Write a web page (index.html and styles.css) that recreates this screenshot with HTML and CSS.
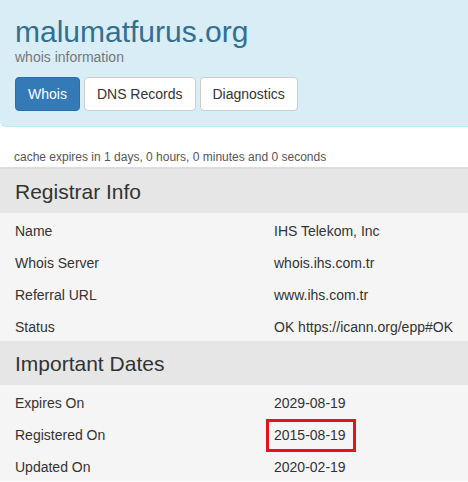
FILE: index.html
```html
<!DOCTYPE html>
<html lang="en">
<head>
    <meta charset="UTF-8">
    <meta name="viewport" content="width=device-width, initial-scale=1.0">
    <title>malumatfurus.org whois information</title>
    <link rel="stylesheet" href="styles.css">
</head>
<body>
    <div class="site-header">
        <h1 class="site-title">malumatfurus.org</h1>
        <div class="site-subtitle">whois information</div>
        <nav class="tabs">
            <a class="btn btn-primary" href="#">Whois</a>
            <a class="btn" href="#">DNS Records</a>
            <a class="btn" href="#">Diagnostics</a>
        </nav>
    </div>

    <div class="cache-note">cache expires in 1 days, 0 hours, 0 minutes and 0 seconds</div>

    <section class="info-section first">
        <h2 class="section-title">Registrar Info</h2>
        <div class="info-row"><span>Name</span><span>IHS Telekom, Inc</span></div>
        <div class="info-row"><span>Whois Server</span><span>whois.ihs.com.tr</span></div>
        <div class="info-row"><span>Referral URL</span><span>www.ihs.com.tr</span></div>
        <div class="info-row"><span>Status</span><span>OK https://icann.org/epp#OK</span></div>
    </section>

    <section class="info-section">
        <h2 class="section-title">Important Dates</h2>
        <div class="info-row"><span>Expires On</span><span>2029-08-19</span></div>
        <div class="info-row"><span>Registered On</span><span><span class="highlight">2015-08-19</span></span></div>
        <div class="info-row"><span>Updated On</span><span>2020-02-19</span></div>
    </section>
</body>
</html>
```

FILE: styles.css
```css
:root {
    --header-bg: #d9edf7;
    --header-border: #bce8f1;
    --title-color: #31708f;
    --text-color: #333333;
    --muted-color: #777777;
    --section-bg: #e6e6e6;
    --row-bg: #f5f5f5;
    --primary: #337ab7;
}
body {
    font-family: "Liberation Sans", Arial, sans-serif;
    font-size: 14px;
    line-height: 20px;
    color: var(--text-color);
    background-color: #ffffff;
    margin: 0;
    overflow: hidden;
}
.site-header {
    background-color: var(--header-bg);
    border-bottom: 1px solid var(--header-border);
    border-radius: 0 0 0 6px;
    padding: 17px 15px 15px;
}
.site-title {
    margin: 0;
    font-size: 30px;
    line-height: 30px;
    font-weight: normal;
    color: var(--title-color);
}
.site-subtitle {
    font-size: 14px;
    line-height: 20px;
    color: var(--muted-color);
}
.tabs {
    display: flex;
    gap: 4px;
    margin-top: 10px;
}
.btn {
    display: inline-block;
    padding: 6px 12px;
    font-size: 14px;
    line-height: 20px;
    color: var(--text-color);
    background-color: #ffffff;
    border: 1px solid #cccccc;
    border-radius: 4px;
    text-decoration: none;
}
.btn-primary {
    color: #ffffff;
    background-color: var(--primary);
    border-color: #2e6da4;
}
.cache-note {
    font-size: 12px;
    line-height: 17px;
    color: #555555;
    padding: 22px 14px 0;
    margin-bottom: 1px;
}
.info-section {
    background-color: var(--row-bg);
}
.info-section.first {
    border-top: 2px solid #dddddd;
}
.section-title {
    margin: 0;
    padding: 11px 15px 9px;
    font-size: 21px;
    line-height: 24px;
    font-weight: normal;
    background-color: var(--section-bg);
}
.info-row {
    display: grid;
    grid-template-columns: 259px 1fr;
    padding: 8px 15px 4px;
    white-space: nowrap;
}
.highlight {
    display: inline-block;
    padding: 3px 7px 4px 5px;
    margin: -3px -7px -4px -5px;
    outline: 3px solid #e3121c;
}
```
